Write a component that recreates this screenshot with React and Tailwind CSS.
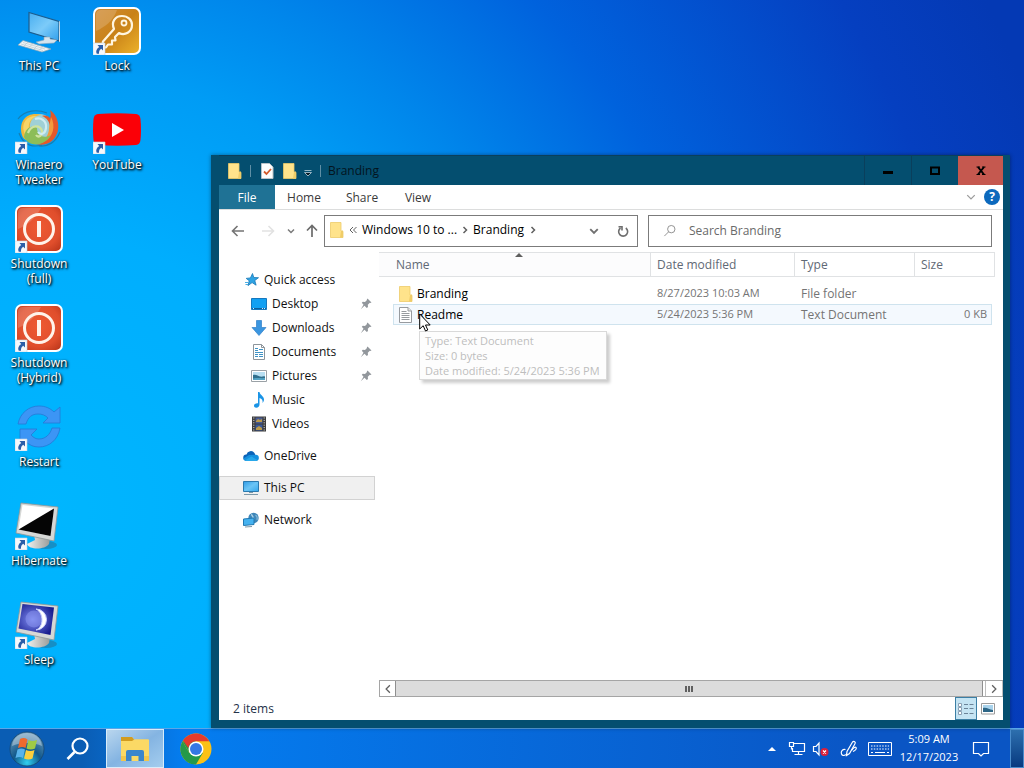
import { useState } from 'react'

const FolderIcon = ({ className }) => (
  <svg viewBox="0 0 14 16" className={className} aria-hidden="true">
    <path d="M.5.5h10.500v9l2 .5v5.500H.5z" fill="#ffe38b" />
    <path d="M11 9l2-.5v7h-3z" fill="#f1cd68" />
    <path d="M.5 15.500V.5H11v8.500l2 .3v6.200z" fill="none" stroke="#edcb69" strokeWidth=".8" />
  </svg>
)

const TextFileIcon = ({ className }) => (
  <svg viewBox="0 0 14 16" className={className} aria-hidden="true">
    <path d="M.5.5h8.500l3.500 3.500v11.500H.5z" fill="#fff" stroke="#979b9f" />
    <path d="M9 .5V4h3.500" fill="#e8e8e8" stroke="#979b9f" />
    <path d="M2.500 4.500h5M2.500 6.500h8M2.500 8.500h8M2.500 10.500h8M2.500 12.500h8" stroke="#969a9e" />
  </svg>
)

const StarIcon = () => (
  <svg viewBox="0 0 16 16" className="size-4" aria-hidden="true">
    <path d="M8.500 1.500l1.300 4 4.700.2-3.700 2.800 1.300 4.700-4-2.600-4.100 3 1.200-4.900-3-2.300 4.200-.5z" fill="#2ea3e3" stroke="#1979b8" strokeWidth=".8" />
    <path d="M1 10.500h3M1.500 12.500h2.500" stroke="#4aaee4" />
  </svg>
)

const DesktopIcon = () => (
  <svg viewBox="0 0 16 16" className="size-4" aria-hidden="true">
    <path d="M.5 2.500h15v11H.5z" fill="#12a0f2" stroke="#1678be" />
    <path d="M1 12.500h14" stroke="#0c5f9c" />
    <path d="M2 12.500h1M11 12.500h1M13 12.500h1" stroke="#d7efff" />
  </svg>
)

const DownloadIcon = () => (
  <svg viewBox="0 0 16 16" className="size-4" aria-hidden="true">
    <path d="M5.500.5h5v7h4.500l-7 8-7-8h4.500z" fill="#3b96e0" stroke="#2f80c9" strokeWidth=".7" />
  </svg>
)

const DocumentIcon = () => (
  <svg viewBox="0 0 16 16" className="size-4" aria-hidden="true">
    <path d="M2.500.5h8l3 3v12h-11z" fill="#fff" stroke="#8d959b" />
    <path d="M10.500.5v3h3" fill="none" stroke="#8d959b" />
    <path d="M4 4.500h3M4 6.500h3M8 5.500h4M4 8.500h8M4 10.500h3M8 10.500h4M4 12.500h3M8 12.500h4" stroke="#3f93c6" />
  </svg>
)

const PictureIcon = () => (
  <svg viewBox="0 0 16 16" className="size-4" aria-hidden="true">
    <path d="M.5 2.500h15v11H.5z" fill="#fff" stroke="#9aa1a6" />
    <path d="M2 4h12v8H2z" fill="#b8dff2" />
    <path d="M2 7c3-1 5 1 7 1.500s3-.5 5 0V12H2z" fill="#2f6f8d" />
    <path d="M2 10.500c4-1 8 0 12-.5v2H2z" fill="#53a3c4" />
  </svg>
)

const MusicIcon = () => (
  <svg viewBox="0 0 16 16" className="size-4" aria-hidden="true">
    <path d="M7 0h1.500c.3 3 4.500 4 4.500 7.500 0 1.500-.7 2.600-1.500 3.500.6-2.500-.5-4.200-3-5v6.500c0 1.800-1.300 3.200-3.200 3.200C3.700 15.700 3 14.800 3 13.700c0-1.700 2-2.700 4-2.400z" fill="#1a94e6" />
  </svg>
)

const VideoIcon = () => (
  <svg viewBox="0 0 16 16" className="size-4" aria-hidden="true">
    <path d="M1 .5h14v15H1z" fill="#3b3b3b" />
    <path d="M4.500 1.500h7v6h-7z" fill="#4a5d94" />
    <path d="M4.500 8.500h7v6h-7z" fill="#39599b" />
    <path d="M5 5l2-2 2 1 2-1v3H5zM5 12l3-2 3 2v2H5z" fill="#bb9a4a" />
    <path d="M2.800 1.500v13M13.200 1.500v13" stroke="#e6e6e6" strokeDasharray="1 1.400" />
  </svg>
)

const CloudIcon = () => (
  <svg viewBox="0 0 16 16" className="size-4" aria-hidden="true">
    <path d="M3.500 6.500A4.500 4.500 0 0 1 11.500 5l1 2.500-6 5H3a3 3 0 0 1 .5-6z" fill="#0b63b8" />
    <path d="M6 7l6.500-.2A3 3 0 0 1 13 13H3.500C1.500 13 .5 12 .3 10.500z" fill="#1490df" />
    <path d="M2 12.200l6.500-3.700L14.500 12c-.5.7-1 1-2 1h-9z" fill="#28a8ea" />
  </svg>
)

const MonitorIcon = () => (
  <svg viewBox="0 0 16 16" className="size-4" aria-hidden="true">
    <defs>
      <linearGradient id="monitor" x1="0" y1="0" x2="1" y2="1">
        <stop offset="0" stopColor="#2f9be6" />
        <stop offset=".5" stopColor="#6cc5f5" />
        <stop offset="1" stopColor="#35a7ec" />
      </linearGradient>
    </defs>
    <path d="M.5 1.500h15v10H.5z" fill="url(#monitor)" stroke="#2b79ae" />
    <path d="M6 12.500h4M1 14.500h14" stroke="#7c98a8" />
  </svg>
)

const NetworkIcon = () => (
  <svg viewBox="0 0 16 16" className="size-4" aria-hidden="true">
    <circle cx="10.500" cy="6" r="5.200" fill="#3f86b8" />
    <path d="M8 2.500c2 .5 1.500 3 3 4.500" fill="none" stroke="#a9d0e6" strokeWidth="1.500" />
    <path d="M12.500 3c1.500 1 2 3 1.500 5" fill="none" stroke="#7fb6d6" strokeWidth="1.200" />
    <path d="M.5 7l10.500-1v6.500L.5 13.500z" fill="#45b2f0" stroke="#2179b3" />
    <path d="M2 15l7-.5" stroke="#7c98a8" />
  </svg>
)

const PinIcon = () => (
  <svg viewBox="0 0 12 12" className="size-3" aria-hidden="true">
    <path d="M7.500.5l4 4-1.200.5-.5-.2-2 2 .2 2.200-1.200 1-2.300-2.300L.8 11.200l2.700-4.500L1.800 4.800l1-1 2.200.2 2-2-.2-.5z" fill="#92979c" />
  </svg>
)

// the little arrow box drawn over each shortcut
const ShortcutArrow = () => (
  <g>
    <path d="M0 36h12v12H0z" fill="#f6f8fb" stroke="#c4d3e0" strokeWidth=".6" />
    <path d="M4.500 38h5.500v5.500L8.200 41.800C6.500 43 5.800 44.500 6 46.800H3.800C2.500 44 3.800 41.500 6.200 39.900z" fill="#2b5ea8" />
  </g>
)

const ThisPcArt = () => (
  <svg viewBox="0 0 48 48" className="size-12" aria-hidden="true">
    <defs>
      <linearGradient id="screen" x1="0" y1="0" x2="1" y2="1">
        <stop offset="0" stopColor="#48aef0" />
        <stop offset=".5" stopColor="#7ccbf9" />
        <stop offset="1" stopColor="#2f9fec" />
      </linearGradient>
    </defs>
    <path d="M14 5.500l30 9v19.500L14 25z" fill="url(#screen)" stroke="#1d5d8d" strokeWidth="1.200" />
    <path d="M44.200 14l.8.500v20l-1 .5z" fill="#d8e5ee" />
    <path d="M29 30v3l-8 2 3 2 15-1 3-3-7-1v-2z" fill="#d5e4ee" stroke="#86a4ba" strokeWidth=".6" />
    <path d="M8 33.500L3 38l24 7 9-3z" fill="#eef3f6" stroke="#8ea6b6" strokeWidth=".7" />
    <path d="M8 35.500l22 6.500M6 37l22 6.500M13 35l-4 4M18 36.500l-4 4M23 38l-4 4M28 39.500l-4 4" stroke="#b5c2ca" strokeWidth=".6" />
  </svg>
)

const WinaeroArt = () => (
  <svg viewBox="0 0 48 48" className="size-12" aria-hidden="true">
    <path d="M3 13C10 4 22 3 32 7M45 26C41 36 33 41 24 40M4 27C8 38 16 42 27 39" fill="none" stroke="#147fb4" strokeWidth="1.200" />
    <circle cx="24" cy="23" r="15" fill="#9fd0d6" />
    <path d="M7 29C3 14 13 5 27 9C19 9 14 15 15 22c1 6 5 10 11 10C18 37 9 36 7 29z" fill="#efb83c" />
    <path d="M9 26C6 16 13 9 22 10c-6 2-9 7-8 13s5 9 9 10C17 36 11 33 9 26z" fill="#f7d568" />
    <path d="M35 4c10 7 11 22 3 30-4 4-11 6-17 4 9-1 14-7 14-16 0-6-3-10-8-12 4-1 6 0 8 2 1-2 1-5 0-8z" fill="#e4582a" />
    <path d="M36 11c5 9 2 20-6 24-3 2-6 3-9 3 8-2 13-8 13-16z" fill="#f39a3d" />
    <path d="M9 31c1-9 8-13 13-9 0 8 7 11 14 7-5 10-21 14-27 2z" fill="#8cbd58" />
    <path d="M13 27c3-8 12-9 14-2 1 5-4 7-6 4" fill="none" stroke="#cfe3a0" strokeWidth="2.200" />
    <path d="M20 13c6-2 12 2 11 9s-6 7-8 4" fill="none" stroke="#cfecf2" strokeWidth="2.200" />
    <ShortcutArrow />
  </svg>
)

const PowerArt = () => (
  <svg viewBox="0 0 48 48" className="size-12" aria-hidden="true">
    <defs>
      <radialGradient id="power" cx=".5" cy=".45" r=".7">
        <stop offset="0" stopColor="#ee5a32" />
        <stop offset=".65" stopColor="#e04e2c" />
        <stop offset="1" stopColor="#b9351a" />
      </radialGradient>
    </defs>
    <rect x="1" y="1" width="46" height="46" rx="6" fill="url(#power)" stroke="#fff" strokeWidth="2" />
    <path d="M3 24V8q0-5 5-5h18C20 14 12 20 3 24z" fill="#fff" opacity=".18" />
    <circle cx="24" cy="24" r="14.500" fill="none" stroke="#fff3ea" strokeWidth="3" />
    <path d="M24 16v16" stroke="#fff3ea" strokeWidth="4" />
    <ShortcutArrow />
  </svg>
)

const RestartArt = () => (
  <svg viewBox="0 0 48 48" className="size-12" aria-hidden="true">
    <g fill="#3c95f5" stroke="#2479d6" strokeWidth=".8">
      <path d="M3 21C5 10 14 3 24 3c6 0 11 2 15 6l6-5v16H28l5-5c-3-3-6-4-10-4-6 0-10 3-12 10z" />
      <path d="M45 25c-2 12-11 19-21 19-6 0-9-2-13-5l-6 4V26h17l-6 6c3 3 5 4 8 4 6 0 11-4 13-11z" />
    </g>
    <ShortcutArrow />
  </svg>
)

const CrtBody = ({ children }) => (
  <svg viewBox="0 0 48 48" className="size-12" aria-hidden="true">
    <defs>
      <linearGradient id="base" x1="0" y1="0" x2="1" y2="0">
        <stop offset="0" stopColor="#f1f1ee" />
        <stop offset="1" stopColor="#9a9c9a" />
      </linearGradient>
      <radialGradient id="night" cx=".4" cy=".5" r=".65">
        <stop offset="0" stopColor="#7f8cf0" />
        <stop offset="1" stopColor="#14188a" />
      </radialGradient>
    </defs>
    <ellipse cx="31" cy="43" rx="11" ry="4" fill="#2b6a8c" opacity=".5" />
    <path d="M19 32l16 4-1 6c-4 6-20 6-22 0l8-4z" fill="url(#base)" />
    <path d="M6 1l37 4-4 34L1 31z" fill="#d6d8d6" stroke="#8f9797" strokeWidth=".8" />
    {children}
    <ShortcutArrow />
  </svg>
)

const HibernateArt = () => (
  <CrtBody>
    <path d="M7.500 3L39 6.500 35.500 34 3.500 27.500z" fill="#fff" />
    <path d="M39 6.500L35.500 34 3.500 27.500z" fill="#050505" />
  </CrtBody>
)

const SleepArt = () => (
  <CrtBody>
    <path d="M7.500 3L39 6.500 35.500 34 3.500 27.500z" fill="url(#night)" />
    <circle cx="19" cy="18" r="8.500" fill="#8d98f2" opacity=".5" />
    <path d="M21 8a10.500 10.500 0 0 1 0 21c8-3 8-17 0-21z" fill="#fff" stroke="#c9d0ff" strokeWidth="1" />
  </CrtBody>
)

const LockArt = () => (
  <svg viewBox="0 0 48 48" className="size-12" aria-hidden="true">
    <defs>
      <linearGradient id="gold" x1="0" y1="0" x2="1" y2="1">
        <stop offset="0" stopColor="#d08a35" />
        <stop offset=".5" stopColor="#c98218" />
        <stop offset="1" stopColor="#edb32b" />
      </linearGradient>
    </defs>
    <rect x="1" y="1" width="46" height="46" rx="6" fill="url(#gold)" stroke="#fff" strokeWidth="2" />
    <path d="M3 24V8q0-5 5-5h16C20 14 12 20 3 24z" fill="#fff" opacity=".18" />
    <path d="M21 22C18 15 22 9 29 9c6 0 10 4 10 9 0 7-7 11-13 8l-4 4 .5 3.500H19v4h-4l-2 3h-4l1-6z" fill="none" stroke="#fff5df" strokeWidth="2.200" strokeLinejoin="round" />
    <circle cx="31" cy="16" r="2.500" fill="none" stroke="#fff5df" strokeWidth="1.800" />
    <ShortcutArrow />
  </svg>
)

const YoutubeArt = () => (
  <svg viewBox="0 0 48 48" className="size-12" aria-hidden="true">
    <path d="M5 8q19-1.500 38 0 4 .5 4.500 5 1 11 0 21-.5 4.500-4.500 5-19 1.500-38 0-4-.5-4.500-5-1-10 0-21Q1 8.500 5 8z" fill="#fb0007" />
    <path d="M19 17v14l12-7z" fill="#fff" />
    <ShortcutArrow />
  </svg>
)

// fills column by column
const shortcuts = [
  { label: 'This PC', Art: ThisPcArt },
  { label: 'Winaero Tweaker', Art: WinaeroArt },
  { label: 'Shutdown (full)', Art: PowerArt },
  { label: 'Shutdown (Hybrid)', Art: PowerArt },
  { label: 'Restart', Art: RestartArt },
  { label: 'Hibernate', Art: HibernateArt },
  { label: 'Sleep', Art: SleepArt },
  { label: 'Lock', Art: LockArt },
  { label: 'YouTube', Art: YoutubeArt },
]

const quickAccess = [
  { label: 'Desktop', Icon: DesktopIcon, pinned: true },
  { label: 'Downloads', Icon: DownloadIcon, pinned: true },
  { label: 'Documents', Icon: DocumentIcon, pinned: true },
  { label: 'Pictures', Icon: PictureIcon, pinned: true },
  { label: 'Music', Icon: MusicIcon },
  { label: 'Videos', Icon: VideoIcon },
]

const files = [
  { name: 'Branding', modified: '8/27/2023 10:03 AM', type: 'File folder', size: '', Icon: FolderIcon },
  { name: 'Readme', modified: '5/24/2023 5:36 PM', type: 'Text Document', size: '0 KB', Icon: TextFileIcon, hover: true },
]

function Chevron({ d, className = 'size-2', stroke = '#606060', width = 1.5 }) {
  return (
    <svg viewBox="0 0 8 8" className={className} fill="none" stroke={stroke} strokeWidth={width} aria-hidden="true">
      <path d={d} />
    </svg>
  )
}

const DOWN = 'M1 2.500l3 3 3-3'
const RIGHT = 'M2.500 1l3 3-3 3'
const LEFT = 'M5.500 1l-3 3 3 3'

function TitleBar() {
  return (
    <header className="flex h-[30px] items-center border-t border-[#0a3f5c] bg-[#044e6f] pl-[9px]">
      <FolderIcon className="h-4 w-3.5" />
      <span className="ml-2 h-3 border-r border-[#5f8fa5]" />
      <button aria-label="Properties" className="ml-[9px]">
        <svg viewBox="0 0 14 16" className="h-4 w-3.5">
          <path d="M1.500.5h8l3.500 3.500v11.500H1.500z" fill="#fdfdfd" stroke="#b9c2c8" />
          <path d="M4 8.500l2.500 2.500L11 6" fill="none" stroke="#d35a2b" strokeWidth="1.800" />
        </svg>
      </button>
      <button aria-label="New folder" className="ml-[9px]">
        <FolderIcon className="h-4 w-3.5" />
      </button>
      <button aria-label="Customize Quick Access Toolbar" className="ml-[7px] pt-1">
        <svg viewBox="0 0 8 8" className="size-2">
          <path d="M.5 1.500h7M.5 3.500L4 7l3.500-3.500z" fill="#0a1a24" stroke="#b9d2de" strokeWidth=".8" />
        </svg>
      </button>
      <span className="ml-2 h-3 border-r border-[#5f8fa5]" />
      <h1 className="ml-[7px] flex-1 text-[12px] leading-4 text-[#03141e]">Branding</h1>
      <div className="flex h-full">
        <button aria-label="Minimize" className="flex w-[47px] items-center justify-center border-l border-[#0a3f5c]">
          <svg viewBox="0 0 12 12" className="size-3"><path d="M1 6h10v3H1z" /></svg>
        </button>
        <button aria-label="Maximize" className="flex w-[47px] items-center justify-center border-l border-[#0a3f5c]">
          <svg viewBox="0 0 12 12" className="size-3">
            <path d="M2 2.500h8v6.500H2z" fill="none" stroke="#000" strokeWidth="2" />
          </svg>
        </button>
        <button aria-label="Close" className="flex w-[45px] items-center justify-center bg-[#c5584f]">
          <svg viewBox="0 0 12 12" className="size-3">
            <path d="M3 2l6 7.500M9 2L3 9.500" stroke="#000" strokeWidth="2" />
            <path d="M1.500 2h3.500M7 2h3.500M1.500 9.500h3.500M7 9.500h3.500" stroke="#000" />
          </svg>
        </button>
      </div>
    </header>
  )
}

function Ribbon() {
  return (
    <nav className="flex h-[25px] items-stretch border-b border-[#dcdddd] text-[12px] text-[#3a3a3a]">
      <button className="w-14 bg-[#1f7295] pt-0.5 text-white">File</button>
      <button className="w-[58px] pt-0.5">Home</button>
      <button className="w-[58px] pt-0.5">Share</button>
      <button className="w-[54px] pt-0.5">View</button>
      <div className="ml-auto flex items-center gap-2 pr-[3px]">
        <button aria-label="Expand the Ribbon">
          <Chevron d={DOWN} className="size-2.5" stroke="#9b9b9b" width={1} />
        </button>
        <button aria-label="Help" className="size-4 rounded-full bg-[#0c69bd] text-[12px] leading-4 font-bold text-white">?</button>
      </div>
    </nav>
  )
}

function AddressRow() {
  const [query, setQuery] = useState('')
  return (
    <div className="flex h-[42px] items-center pr-[11px]">
      <div className="flex w-[105px] items-center pl-3">
        <button aria-label="Back">
          <svg viewBox="0 0 14 14" className="size-3.5" fill="none" stroke="#747474" strokeWidth="1.600"><path d="M13 7H2M6.500 2L1.500 7l5 5" /></svg>
        </button>
        <button aria-label="Forward" className="ml-4">
          <svg viewBox="0 0 14 14" className="size-3.5" fill="none" stroke="#e2e2e2" strokeWidth="1.600"><path d="M1 7h11M7.500 2l5 5-5 5" /></svg>
        </button>
        <button aria-label="Recent locations" className="ml-3">
          <Chevron d={DOWN} stroke="#7a7a7a" />
        </button>
        <button aria-label="Up" className="ml-2.5">
          <svg viewBox="0 0 14 14" className="size-3.5" fill="none" stroke="#6b6b6b" strokeWidth="1.700"><path d="M7 13V2M2 6.500l5-5 5 5" /></svg>
        </button>
      </div>
      <div className="flex h-8 w-[314px] items-center border border-[#7b7b7b] pb-0.5 pl-[5px] text-[12px] text-black">
        <FolderIcon className="h-4 w-3.5" />
        <svg viewBox="0 0 8 8" className="mx-[5px] size-2" fill="none" stroke="#606060" aria-hidden="true">
          <path d="M4 1L1 4l3 3M7.500 1l-3 3 3 3" />
        </svg>
        <button className="whitespace-nowrap">Windows 10 to ...</button>
        <Chevron d={RIGHT} className="mx-1 size-2" />
        <button>Branding</button>
        <Chevron d={RIGHT} className="mx-[5px] size-2" />
        <button aria-label="Previous locations" className="ml-auto pt-0.5">
          <Chevron d={DOWN} className="size-2.5" stroke="#707070" />
        </button>
        <button aria-label="Refresh" className="mr-2 ml-[18px] pt-0.5">
          <svg viewBox="0 0 12 12" className="size-3" fill="none" stroke="#6e6e6e" strokeWidth="1.600">
            <path d="M8.800 3a4.500 4.500 0 1 1-5.300 0M1.500 1.800h3.500v3.700" />
          </svg>
        </button>
      </div>
      <label className="ml-2.5 flex h-8 flex-1 items-center border border-[#7b7b7b] pl-3.5">
        <svg viewBox="0 0 14 14" className="size-3.5" fill="none" stroke="#8a8a8a" aria-hidden="true">
          <circle cx="9" cy="5" r="4" />
          <path d="M6 8l-4.500 4.500" />
        </svg>
        <input
          type="text"
          aria-label="Search Branding"
          value={query}
          onChange={(e) => setQuery(e.target.value)}
          placeholder="Search Branding"
          className="ml-[13px] w-full text-[12px] placeholder-[#6a6a6a] outline-none"
        />
      </label>
    </div>
  )
}

function Sidebar() {
  return (
    <aside className="w-40 shrink-0 pt-4 text-[12px] text-[#111]">
      <a href="#quick" className="flex h-6 items-center gap-1 pl-[25px]"><StarIcon />Quick access</a>
      <ul>
        {quickAccess.map(({ label, Icon, pinned }) => (
          <li key={label}>
            <a href={`#${label}`} className="flex h-6 items-center gap-[5px] pr-[7px] pl-8">
              <Icon />
              <span className="flex-1">{label}</span>
              {pinned && <PinIcon />}
            </a>
          </li>
        ))}
      </ul>
      <div className="mt-2 space-y-2">
        <a href="#onedrive" className="flex h-6 items-center gap-[5px] pl-6"><CloudIcon />OneDrive</a>
        <a href="#pc" className="mr-1 flex h-6 items-center gap-[5px] border border-[#d2d2d2] bg-[#f0f0f0] pl-[23px]"><MonitorIcon />This PC</a>
        <a href="#network" className="flex h-6 items-center gap-[5px] pl-6"><NetworkIcon />Network</a>
      </div>
    </aside>
  )
}

function FileTable() {
  const th = 'border-y border-r border-[#e0e2e4] pl-1.5 text-left font-normal'
  return (
    <table className="w-[616px] table-fixed border-separate border-spacing-0 text-[12px]">
      <colgroup>
        <col className="w-[14px]" />
        <col className="w-[258px]" />
        <col className="w-36" />
        <col className="w-[120px]" />
        <col className="w-[77px]" />
        <col className="w-[3px]" />
      </colgroup>
      <thead className="text-[#5f6975]">
        <tr className="h-[25px]">
          <th colSpan={2} className="relative border-y border-r border-[#e0e2e4] bg-[#fcfcfd] pl-[17px] text-left font-normal">
            Name
            <svg viewBox="0 0 8 4" className="absolute top-0 left-1/2 h-1 w-2" aria-hidden="true">
              <path d="M0 4l4-4 4 4z" fill="#5f5f5f" />
            </svg>
          </th>
          <th className={th}>Date modified</th>
          <th className={th}>Type</th>
          <th colSpan={2} className={th}>Size</th>
        </tr>
      </thead>
      <tbody className="text-[#747474]">
        <tr className="h-1.5"><td colSpan={6} /></tr>
        {files.map(({ name, modified, type, size, Icon, hover }) => {
          const cell = hover ? 'border-y border-[#cfe3ee] bg-[#f4f9fe]' : 'border-y border-transparent'
          return (
            <tr key={name} className="h-[21px]">
              <td />
              <td className={`${cell} border-l pl-[5px]`}>
                <div className="flex items-center gap-1 text-black"><Icon className="h-4 w-3.5" />{name}</div>
              </td>
              <td className={`${cell} pl-1.5 text-[11px]`}>{modified}</td>
              <td className={`${cell} pl-1.5`}>{type}</td>
              <td className={`${cell} border-r pr-1 text-right text-[11px]`}>{size}</td>
              <td />
            </tr>
          )
        })}
      </tbody>
    </table>
  )
}

function Explorer() {
  return (
    <main className="absolute top-[155px] right-3.5 bottom-0 left-[211px] flex flex-col bg-[#044e6f] pr-[7px] pb-2 pl-2 shadow-[0_0_4px_rgba(0,0,0,0.4)]">
      <TitleBar />
      <div className="flex min-h-0 flex-1 flex-col bg-white">
        <Ribbon />
        <AddressRow />
        <div className="flex min-h-0 flex-1">
          <Sidebar />
          <section className="flex min-w-0 flex-1 flex-col">
            <FileTable />
            <div className="mt-auto flex h-[17px] border-y border-[#a5a5a5]">
              <button aria-label="Scroll left" className="flex w-4 items-center justify-center border-l border-[#a5a5a5]">
                <Chevron d={LEFT} className="size-2.5" width={1} />
              </button>
              <div className="flex flex-1 items-center justify-center gap-px border-x border-[#8f8f8f] bg-[#dcdcdc]">
                <span className="h-1.5 w-0.5 bg-[#606060]" />
                <span className="h-1.5 w-0.5 bg-[#606060]" />
                <span className="h-1.5 w-0.5 bg-[#606060]" />
              </div>
              <button aria-label="Scroll right" className="ml-0.5 flex w-[18px] items-center justify-center border-x border-[#bdbdbd]">
                <Chevron d={RIGHT} className="size-2.5" width={1} />
              </button>
            </div>
          </section>
        </div>
        <footer className="flex h-[23px] items-center pr-2 pl-3.5 text-[12px] text-[#243249]">
          <span>2 items</span>
          <button aria-label="Details view" className="ml-auto flex h-[23px] w-[22px] items-center justify-center border border-[#3c7fa5] bg-[#c5e4f3]">
            <svg viewBox="0 0 18 14" className="h-3.5 w-[18px]" fill="none">
              <path d="M1.500 1.500h3v3h-3zM1.500 5.500h3v3h-3zM1.500 9.500h3v3h-3z" fill="#fff" stroke="#8aa0b4" />
              <path d="M7 2.500h4M12.500 2.500h4M7 6.500h4M12.500 6.500h4M7 11.500h4M12.500 11.500h4" stroke="#6b8398" />
            </svg>
          </button>
          <button aria-label="Large icons view" className="ml-1">
            <svg viewBox="0 0 14 12" className="h-3 w-3.5">
              <path d="M.5.5h13v10.500H.5z" fill="#fff" stroke="#9a9a9a" />
              <path d="M2 2h10v7H2z" fill="#a9d3ec" />
              <path d="M2 5c4-1 6 2 10 2v2H2z" fill="#2d6686" />
            </svg>
          </button>
        </footer>
      </div>
    </main>
  )
}

function Taskbar() {
  return (
    <footer className="flex h-10 items-stretch border-t border-[#5aa6e8] bg-linear-to-r from-[#0a5db4] from-8% via-[#047df0] via-18% to-[#0a55c4] to-85% text-white shadow-[0_-1px_0_#0a3d7c]">
      <button aria-label="Start" className="flex w-[54px] items-center justify-center">
        <svg viewBox="0 0 36 36" className="size-9">
          <defs>
            <radialGradient id="orb" cx=".5" cy=".9" r=".9">
              <stop offset="0" stopColor="#2fd0f0" />
              <stop offset=".45" stopColor="#12598c" />
              <stop offset="1" stopColor="#6f9cbb" />
            </radialGradient>
          </defs>
          <circle cx="18" cy="18" r="17" fill="url(#orb)" stroke="#17466e" strokeWidth=".8" />
          <path d="M3 15C4 6 11 2 18 2s14 4 15 13c-8-4-22-4-30 0z" fill="#fff" opacity=".35" />
          <path d="M11 8q4-2 7.500.5l-2 8.500q-3-2-7.500 0z" fill="#ee6a2e" />
          <path d="M19.500 9q3.500 2 8.500 0l-2 8.500q-4 2-8.500 0z" fill="#9fca45" />
          <path d="M8.500 18.500q4-2 7.500 0l-2 8.500q-3-2-7.500 0z" fill="#58b3ec" />
          <path d="M17 19q4 2 8.500 0l-2 8.500q-4 2-8.500 0z" fill="#fbcf3d" />
        </svg>
      </button>
      <button aria-label="Search" className="flex w-[52px] items-center justify-center pr-1">
        <svg viewBox="0 0 24 24" className="size-6" fill="none" stroke="#fff" strokeWidth="2.200">
          <circle cx="14" cy="9" r="7.500" />
          <path d="M8.500 15L1.500 22" strokeWidth="2.600" />
        </svg>
      </button>
      <button aria-label="File Explorer" className="flex w-[58px] items-center justify-center border border-[#d9ecfa] bg-linear-to-br from-[#b9d6ee] via-[#84b4e2] to-[#a4cdee]">
        <svg viewBox="0 0 28 24" className="h-6 w-7">
          <path d="M0 0h11l2 2.500h14V24H0z" fill="#f7d05c" />
          <path d="M0 0h11l2 2.500L11 4H0z" fill="#d29c20" />
          <path d="M0 4h12l2-1.500h14V24H0z" fill="#fbd965" />
          <path d="M5 24V15q0-2 2-2h14q2 0 2 2v9h-5.500v-5h-7v5z" fill="#3a86cc" />
          <path d="M0 19h5v5H0zM23 19h5v5h-5z" fill="#f2c64b" />
        </svg>
      </button>
      <button aria-label="Google Chrome" className="flex w-16 items-center justify-center">
        <svg viewBox="0 0 32 32" className="size-8">
          <circle cx="16" cy="16" r="15.500" fill="#fbc116" />
          <path d="M2.600 8.200A15.500 15.500 0 0 0 16 31.500l6.800-11.600L16 16l-6.800 3.900z" fill="#24994a" />
          <path d="M2.600 8.200l6.700 11.700L13 12l3-3.800z" fill="#24994a" />
          <path d="M3 7.600A15.500 15.500 0 0 1 29.400 8.200H16c-4 0-7 3-7.500 7z" fill="#e33b2e" />
          <circle cx="16" cy="16" r="7.500" fill="#fff" />
          <circle cx="16" cy="16" r="6" fill="#3478e4" />
        </svg>
      </button>
      <div className="ml-auto flex items-center">
        <button aria-label="Show hidden icons">
          <svg viewBox="0 0 8 5" className="h-[5px] w-2"><path d="M0 5l4-4 4 4z" fill="#fff" /></svg>
        </button>
        <button aria-label="Network" className="ml-3">
          <svg viewBox="0 0 18 16" className="h-4 w-[18px]" fill="none" stroke="#fff" strokeWidth="1.200">
            <path d="M6 2.500h10.500v8H4.500V7M10.500 10.500v3M6.500 13.500h8" />
            <path d="M1.500 1.500h4v4h-4zM3.500 5.500v2.500h1" />
          </svg>
        </button>
        <button aria-label="Volume muted" className="ml-1.5">
          <svg viewBox="0 0 18 16" className="h-4 w-[18px]">
            <path d="M1.500 5.500h2.500L7 2v12l-3-3.500H1.500z" fill="none" stroke="#fff" strokeWidth="1.200" />
            <circle cx="12.500" cy="11" r="4" fill="#d9213c" />
            <path d="M11 9.500l3 3M14 9.500l-3 3" stroke="#fff" strokeWidth="1.200" />
          </svg>
        </button>
        <button aria-label="Windows Ink Workspace" className="ml-2.5">
          <svg viewBox="0 0 18 18" className="size-[18px]" fill="none" stroke="#fff" strokeWidth="1.200">
            <path d="M5.500 9.500c-3-.5-5 2-4 4.500s4 1.500 5.500-.5" />
            <path d="M6.500 15.500l.5-4L12.500 2c1.500-1.500 3.500 0 2.500 1.800L9.500 13.500z" />
            <path d="M11.500 10.500c1.500-2.500 3.500-4 4.500-3s-.5 3-3 4" />
          </svg>
        </button>
        <button aria-label="Touch keyboard" className="ml-2.5">
          <svg viewBox="0 0 24 14" className="h-3.5 w-6" fill="none" stroke="#fff">
            <path d="M.5.5h23v13H.5z" />
            <path d="M3 4h18M3 7h18" strokeDasharray="1.500 1.300" />
            <path d="M3 10.500h2M7 10.500h10M19 10.500h2" />
          </svg>
        </button>
        <button className="w-[74px] pb-0.5 text-center text-[11px] leading-[18px]">
          5:09 AM
          <br />
          12/17/2023
        </button>
        <button aria-label="Notifications" className="ml-1.5">
          <svg viewBox="0 0 18 18" className="size-[18px]" fill="none" stroke="#fff" strokeWidth="1.200">
            <path d="M1.500 2.500h15v11h-5L9 16l-2.500-2.500h-5z" />
          </svg>
        </button>
        <button aria-label="Show desktop" className="ml-5 h-full w-3.5 border border-[#4a8ccb] bg-linear-to-b from-[#2d6fae] to-[#083a80]" />
      </div>
    </footer>
  )
}

export default function App() {
  return (
    <div className="flex h-screen flex-col overflow-hidden font-['Open_Sans','Noto_Sans',sans-serif]">
      <div className="relative min-h-0 flex-1 bg-[radial-gradient(103%_151%_at_5%_70%,#00b6fe_0%,#00aefe_25%,#009cf5_40%,#0086eb_50%,#0062dd_65%,#053fc0_88%,#0439b4_100%)]">
        <div className="grid w-fit grid-flow-col grid-rows-[repeat(7,99px)]">
          {shortcuts.map(({ label, Art }) => (
            <button key={label} className="flex w-[78px] flex-col items-center px-1 pt-[7px] text-[12px] leading-[15px] text-white [text-shadow:1px_1px_2px_#000,1px_1px_3px_#000]">
              <Art />
              <span className="mt-[3px] max-w-16">{label}</span>
            </button>
          ))}
        </div>
        <Explorer />
        <div role="tooltip" className="absolute top-[331px] left-[419px] border border-[#d9d9d9] bg-[#fdfdfd] py-px pr-1.5 pl-[5px] text-[11px] leading-[15px] whitespace-nowrap text-[#bdbdbd] shadow-[3px_3px_3px_rgba(0,0,0,0.2)]">
          <p>Type: Text Document</p>
          <p>Size: 0 bytes</p>
          <p>Date modified: 5/24/2023 5:36 PM</p>
        </div>
        <svg viewBox="0 0 12 19" className="absolute top-[313px] left-[419px] h-[19px] w-3" aria-hidden="true">
          <path d="M.7 1v15l3.500-3.300 2.300 5.300 2.300-1-2.300-5h4.700z" fill="#fff" stroke="#000" />
        </svg>
      </div>
      <Taskbar />
    </div>
  )
}
